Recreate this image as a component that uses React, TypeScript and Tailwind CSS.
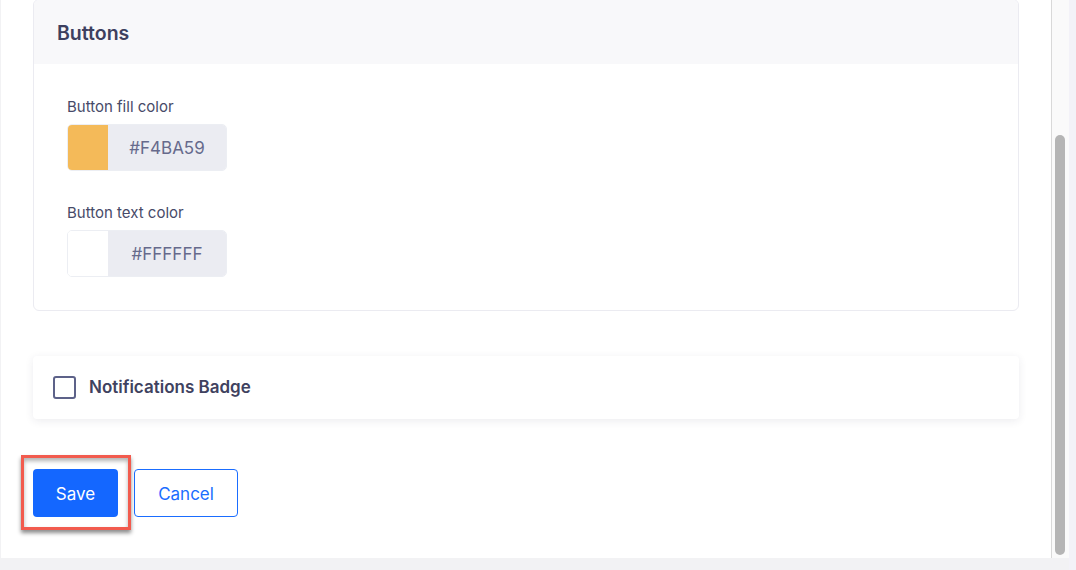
import React, { useState } from 'react';

const ColorField = ({ label, value, swatch }: any) => (
  <div>
    <p className="text-[15px] leading-[20px] text-[#474a68] mb-[7px] pt-[1px]">{label}</p>
    <div className="flex w-[160px] h-[47px] rounded-[5px] overflow-hidden border border-[#eceef3]">
      <div className="w-[40px] h-full" style={{ backgroundColor: swatch }} />
      <div className="flex-1 bg-[#ebecf2] flex items-center justify-center pt-[2px] text-[17px] text-[#666a8c]">
        {value}
      </div>
    </div>
  </div>
);

const App = () => {
  const [badge, setBadge] = useState(false);

  return (
    <div className="w-[1076px] h-[570px] bg-[#f2f2f4] flex overflow-hidden" style={{ fontFamily: 'Inter, "Noto Sans", sans-serif' }}>
      <div className="ml-[1px] w-[1068px] h-[558px] bg-white flex">
        {/* Scrollable content */}
        <div className="w-[1050px] pl-[32px] pr-[32px]">
          <div className="mt-[-1px] rounded-[6px] border border-[#ebebf1] overflow-hidden">
            <div className="h-[64px] bg-[#f8f8fa] flex items-center pl-[23px] pt-[4px]">
              <h2 className="text-[19.5px] font-semibold text-[#3d405f]">Buttons</h2>
            </div>
            <div className="px-[33px] pt-[32px] pb-[33px] flex flex-col gap-[31px]">
              <ColorField label="Button fill color" value="#F4BA59" swatch="#f4ba59" />
              <ColorField label="Button text color" value="#FFFFFF" swatch="#ffffff" />
            </div>
          </div>

          <div className="mt-[45px] h-[63px] bg-white rounded-[4px] shadow-[0_2px_8px_rgba(40,40,80,0.09)] flex items-center pl-[20px] gap-[13px]">
            <button
              onClick={() => setBadge(!badge)}
              className="w-[23px] h-[23px] rounded-[3px] border-2 border-[#5d6289] bg-white flex items-center justify-center"
            >
              {badge && <span className="text-[#5d6289] text-[14px]">✓</span>}
            </button>
            <span className="text-[17px] font-semibold text-[#3f4260] pt-[1px]">Notifications Badge</span>
          </div>

          <div className="mt-[50px] flex gap-[16px]">
            <div className="relative">
              <button className="w-[85px] h-[48px] rounded-[4px] bg-[#1467ff] text-white text-[17px] pt-[3px]">Save</button>
              <div className="absolute left-[-12px] top-[-14px] right-[-13px] bottom-[-13px] border-[3px] border-[#f25b4e] shadow-[0_3px_4px_rgba(0,0,0,0.45),inset_0_3px_4px_rgba(0,0,0,0.3)] pointer-events-none" />
            </div>
            <button className="w-[104px] h-[48px] rounded-[4px] bg-white border border-[#1a6dff] text-[#1a6dff] text-[17px] pt-[3px]">Cancel</button>
          </div>
        </div>

        {/* Scrollbar */}
        <div className="w-[18px] h-full border-l border-[#d9d9d9] bg-[#fafafa] pt-[135px] pl-[3px]">
          <div className="w-[10px] h-[420px] rounded-full bg-[#b5b5b5]" />
        </div>
      </div>
      <div className="flex-1 bg-[#f3f2f8]" />
    </div>
  );
};

export default App;
